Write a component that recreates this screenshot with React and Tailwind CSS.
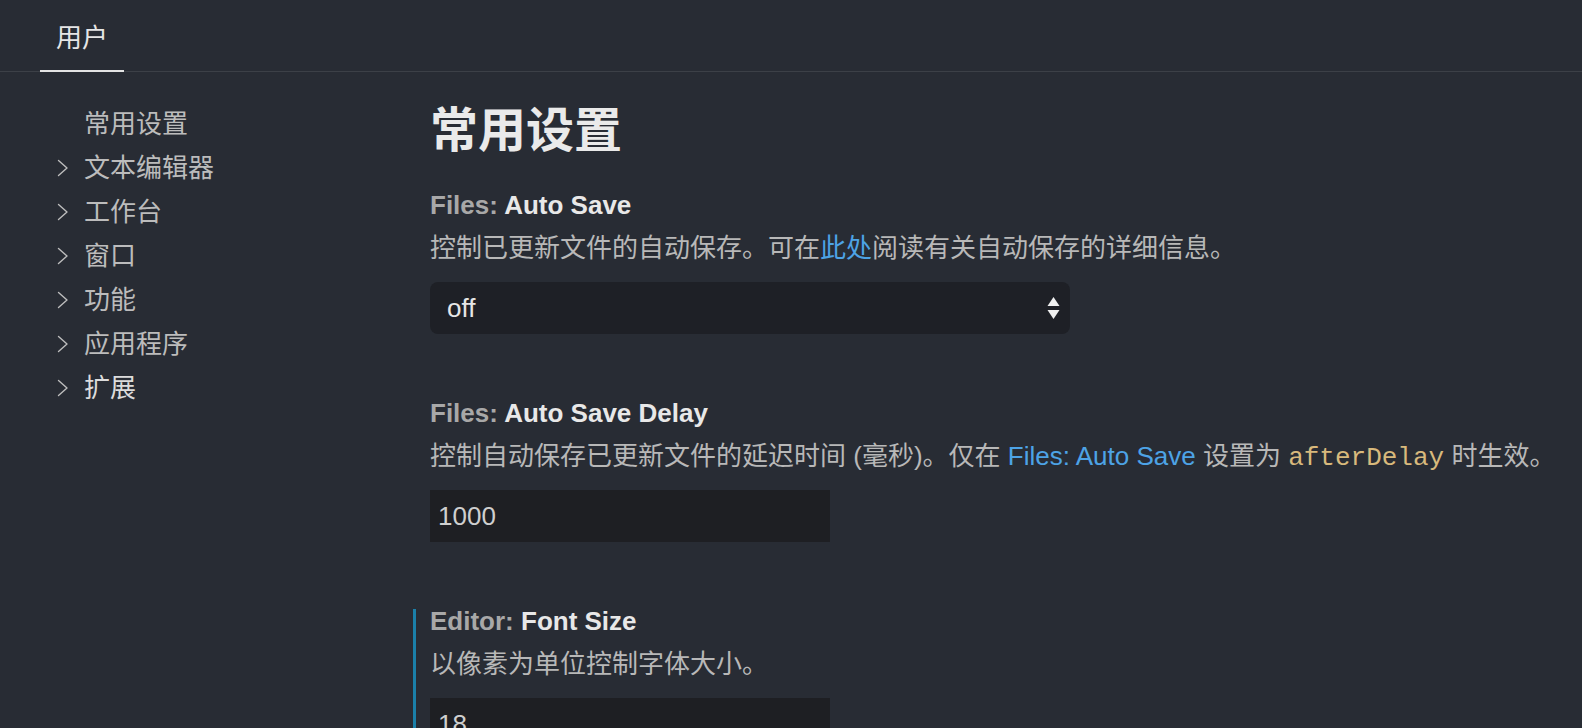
import React from 'react';

const sans = { fontFamily: '"Liberation Sans", "Noto Sans CJK SC", sans-serif' };

const groups = [
    { label: '常用设置', chevron: false },
    { label: '文本编辑器', chevron: true },
    { label: '工作台', chevron: true },
    { label: '窗口', chevron: true },
    { label: '功能', chevron: true },
    { label: '应用程序', chevron: true },
    { label: '扩展', chevron: true },
];

function Chevron() {
    return (
        <svg width="12" height="18" viewBox="0 0 12 18" fill="none" className="shrink-0">
            <path d="M1.5 1.5L10 9L1.5 16.5" stroke="#bdbdbd" strokeWidth="1.4" strokeLinecap="round" strokeLinejoin="round" />
        </svg>
    );
}

function SettingItem({ category, name, focused, children, control }) {
    return (
        <div className={`border-l-[3px] pl-[14px] pb-[67px] ${focused ? 'border-[#1b80a9]' : 'border-transparent'}`}>
            <div className="h-[24px] text-[26px] leading-[24px] font-bold">
                <span className="text-[#a8a8a8]">{category}: </span>
                <span className="text-[#e8e8e8]">{name}</span>
            </div>
            <div className="mt-[18px] h-[26px] text-[26px] leading-[26px] text-[#b8b8b8] whitespace-nowrap">{children}</div>
            <div className="mt-[21px]">{control}</div>
        </div>
    );
}

export default function App() {
    return (
        <div className="h-screen w-full overflow-hidden bg-[#282c34]" style={sans}>
            <div className="flex h-[72px] items-stretch border-b border-[#3c4047] pl-[40px]">
                <div className="relative flex w-[84px] items-center justify-center pt-[5px] text-[26px] text-[#e6e6e6]">
                    用户
                    <div className="absolute bottom-[-1px] left-0 right-0 h-[2px] bg-[#e4e4e4]" />
                </div>
            </div>

            <div className="flex">
                <nav className="w-[413px] shrink-0 pl-[57px] pt-[30px]">
                    {groups.map((g) => (
                        <div key={g.label} className="flex h-[44px] items-center">
                            <div className="flex w-[27px] items-center">{g.chevron && <Chevron />}</div>
                            <span className={`text-[26px] leading-none ${g.label === '扩展' ? 'text-[#dcdcdc]' : 'text-[#bcbcbc]'}`}>{g.label}</span>
                        </div>
                    ))}
                </nav>

                <main className="flex-1 pt-[31px]">
                    <h1 className="mb-[34px] pl-[17px] text-[48px] font-bold leading-[56px] text-[#eaeaea]">常用设置</h1>

                    <SettingItem
                        category="Files"
                        name="Auto Save"
                        control={
                            <div className="relative flex h-[52px] w-[640px] items-center rounded-[8px] bg-[#1e2026] pl-[17px] text-[26px] text-[#e6e6e6]">
                                off
                                <svg width="13" height="22" viewBox="0 0 13 22" className="absolute right-[10px] top-[15px]">
                                    <path d="M6.5 0L12.5 9H0.5Z" fill="#f0f0f0" />
                                    <path d="M6.5 22L12.5 13H0.5Z" fill="#f0f0f0" />
                                </svg>
                            </div>
                        }
                    >
                        控制已更新文件的自动保存。可在<span className="text-[#4da3e6]">此处</span>阅读有关自动保存的详细信息。
                    </SettingItem>

                    <SettingItem
                        category="Files"
                        name="Auto Save Delay"
                        control={
                            <div className="flex h-[52px] w-[400px] items-center bg-[#1e1f23] pl-[8px] text-[26px] text-[#cfcfcf]">1000</div>
                        }
                    >
                        控制自动保存已更新文件的延迟时间 (毫秒)。仅在 <span className="text-[#4da3e6]">Files: Auto Save</span> 设置为{' '}
                        <span className="text-[26px] text-[#d8b97c]" style={{ fontFamily: '"Liberation Mono", monospace' }}>afterDelay</span> 时生效。
                    </SettingItem>

                    <SettingItem
                        category="Editor"
                        name="Font Size"
                        focused
                        control={
                            <div className="flex h-[52px] w-[400px] items-center bg-[#1e1f23] pl-[8px] text-[26px] text-[#cfcfcf]">18</div>
                        }
                    >
                        以像素为单位控制字体大小。
                    </SettingItem>
                </main>
            </div>
        </div>
    );
}
